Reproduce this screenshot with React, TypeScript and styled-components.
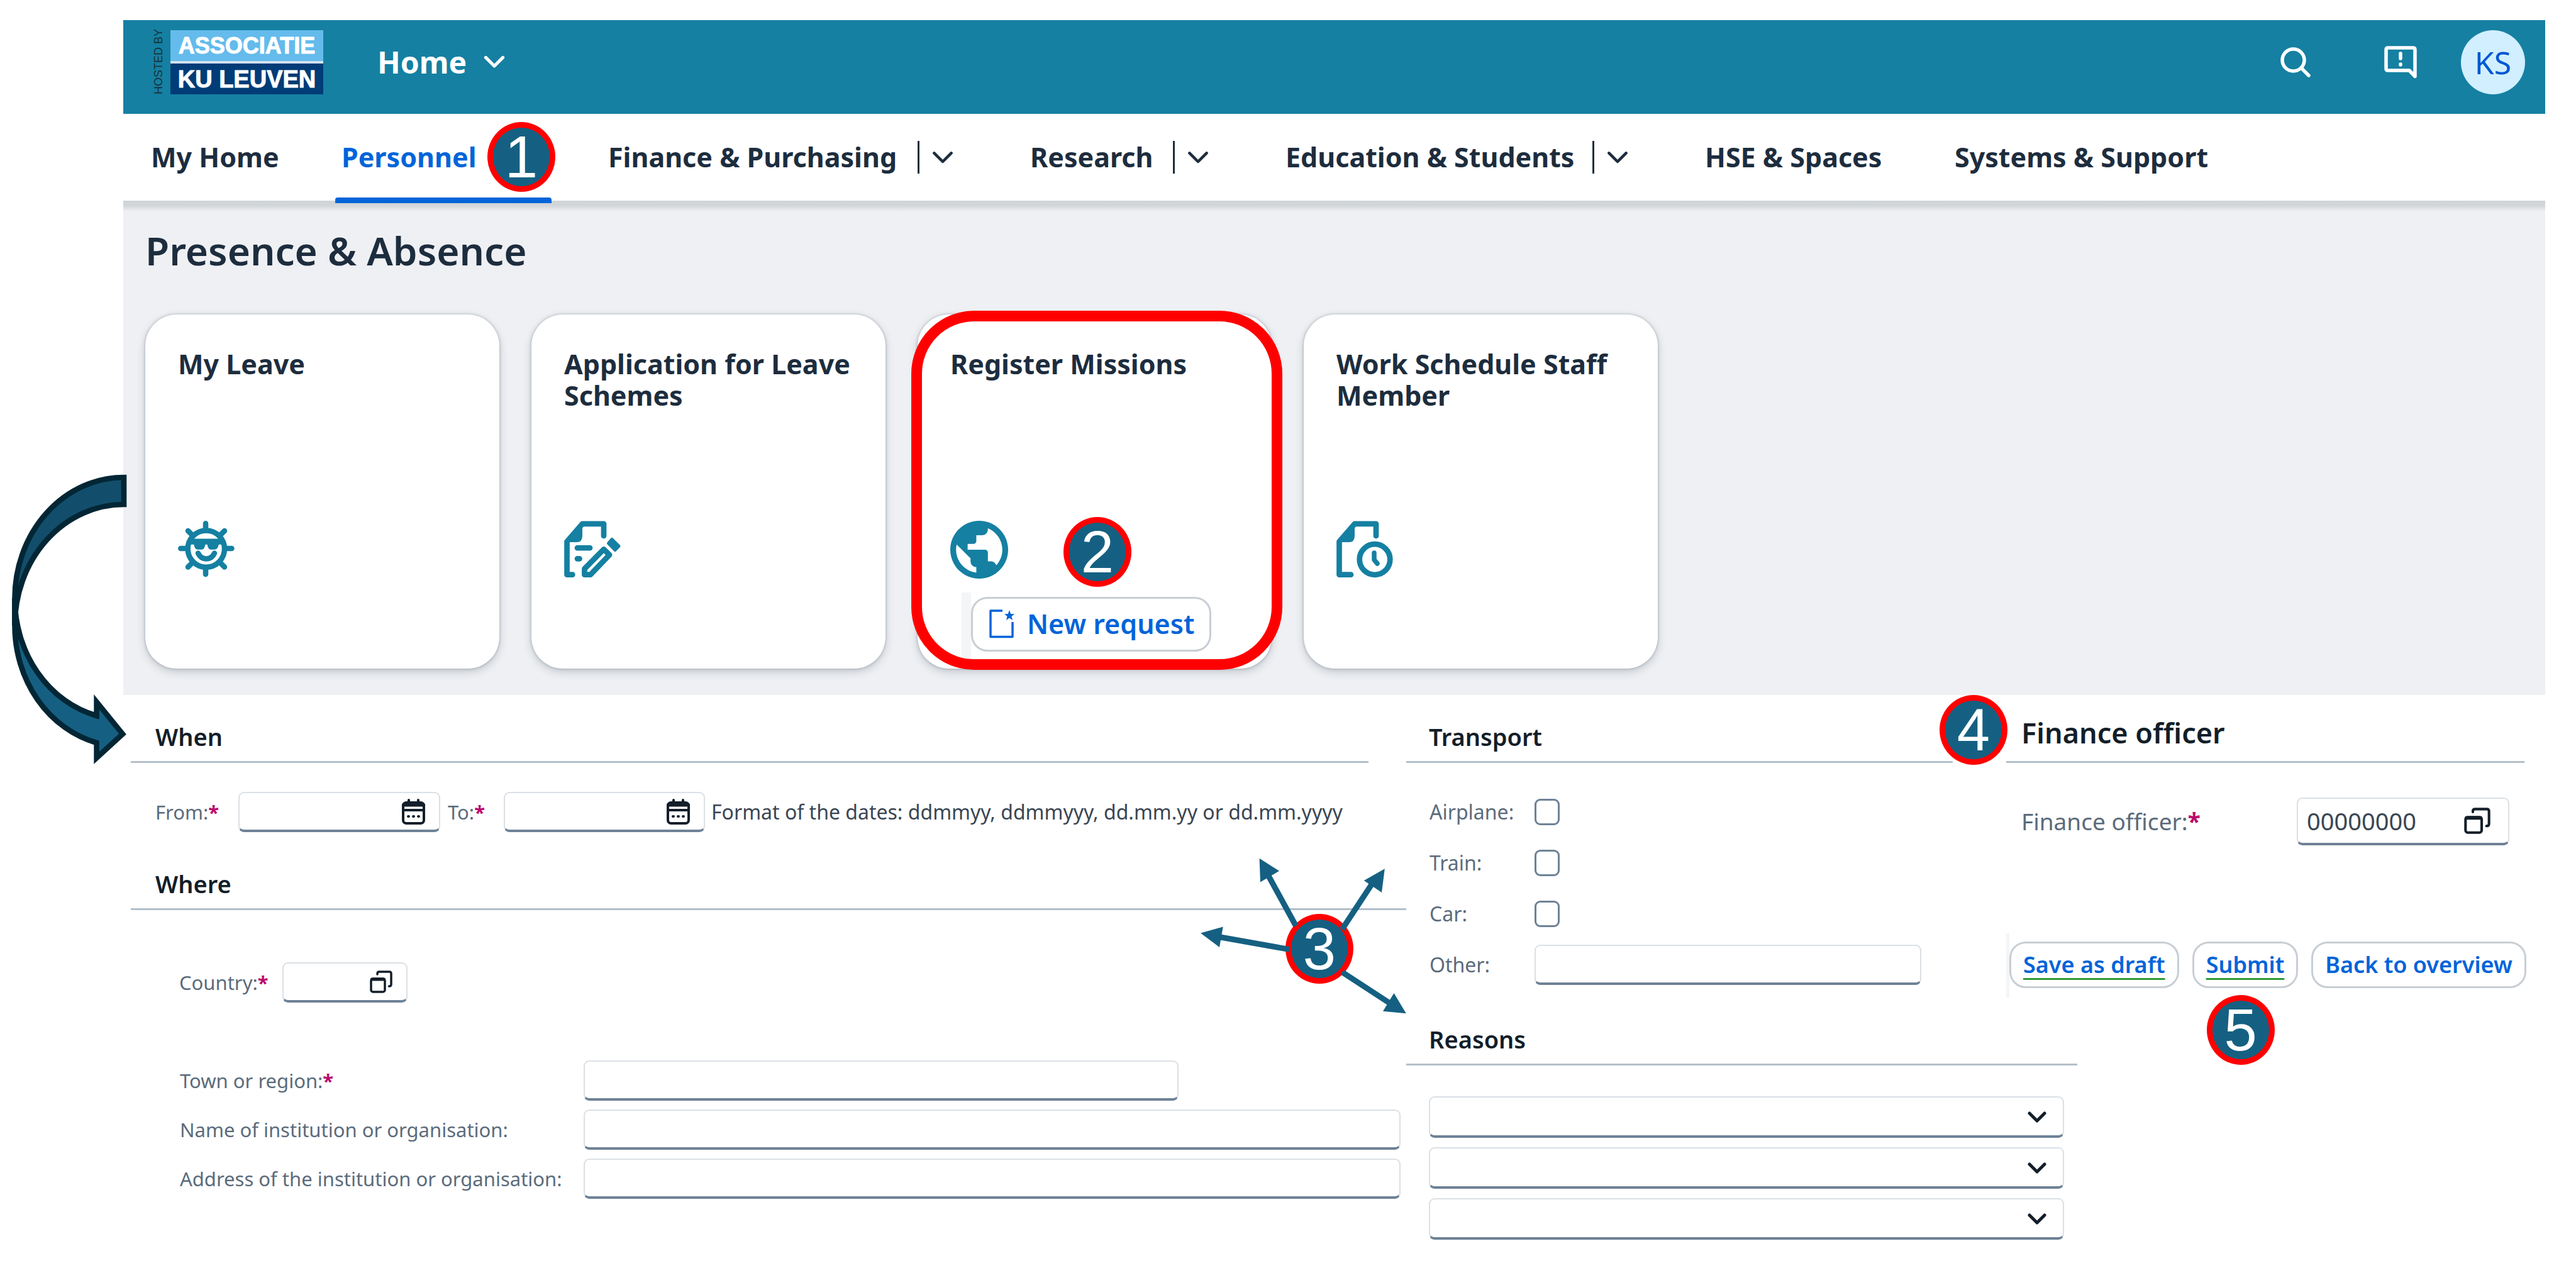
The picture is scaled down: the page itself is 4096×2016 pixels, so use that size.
import React from 'react';
import styled, { createGlobalStyle, css } from 'styled-components';
import { MdPublic } from 'react-icons/md';

const color = {
  brand: '#1580a2',
  ink: '#1d2d3e',
  heading: '#131e29',
  label: '#5b6b7b',
  text: '#3a4653',
  link: '#0064d9',
  shade: '#eff0f3',
  line: '#b3bfca',
  fieldEdge: '#dbe0e5',
  fieldBase: '#6e8296',
  required: '#ba066c',
  marker: '#156082',
  ring: '#ff0000',
};

const GlobalStyle = createGlobalStyle`
  *, *::before, *::after { box-sizing: border-box; }
  body {
    margin: 0;
    background: #fff;
    color: ${color.ink};
    font-family: "Noto Sans", "Open Sans", sans-serif;
  }
  button, input, select { font: inherit; color: inherit; margin: 0; }
  h1, h2, h3 { margin: 0; }
`;

const Page = styled.div`
  position: relative;
  padding: 32px 49px 40px 196px;
`;

/* ---------- header ---------- */

const Header = styled.header`
  display: flex;
  align-items: center;
  height: 149px;
  padding: 0 32px 16px 46px;
  background: ${color.brand};
  color: #fff;
`;

const Logo = styled.div`
  display: flex;
  align-items: center;
  gap: 9px;
`;

const HostedBy = styled.span`
  writing-mode: vertical-rl;
  transform: rotate(180deg);
  font: 18px/20px "Liberation Sans", sans-serif;
  color: #16303a;
  white-space: nowrap;
`;

const LogoPlates = styled.span`
  display: grid;
  gap: 4px;
  width: 243px;
  background: #d3e2f0;
`;

const Plate = styled.span<{ $bg: string; $size: number }>`
  height: 49px;
  background: ${(p) => p.$bg};
  color: #fff;
  font: bold ${(p) => p.$size}px/50px "Liberation Sans", sans-serif;
  -webkit-text-stroke: 1px #fff;
  text-align: center;
  white-space: nowrap;
`;

const HomeButton = styled.button`
  display: flex;
  align-items: center;
  gap: 27px;
  margin-left: 86px;
  padding: 0;
  border: 0;
  background: none;
  color: #fff;
  font-size: 48px;
  font-weight: 700;
  line-height: 64px;
`;

const HeaderTools = styled.div`
  display: flex;
  align-items: center;
  margin-left: auto;
`;

const ToolButton = styled.button<{ $after: number }>`
  display: flex;
  padding: 0;
  margin-right: ${(p) => p.$after}px;
  border: 0;
  background: none;
  color: #fff;
`;

const Avatar = styled.button`
  width: 102px;
  height: 102px;
  padding: 0;
  border: 0;
  border-radius: 50%;
  background: #d1efff;
  color: #0057d2;
  font-size: 50px;
  line-height: 100px;
`;

/* ---------- navigation ---------- */

const Nav = styled.nav`
  display: grid;
  grid-template-columns: 223px 344px 591px 326px 587px 317px auto;
  justify-content: start;
  column-gap: 80px;
  height: 138px;
  padding-left: 34px;
  background: #fff;
`;

const NavItem = styled.div<{ $active?: boolean }>`
  position: relative;
  display: flex;
  align-items: center;
  padding: 0 32px 0 10px;
  ${(p) =>
    p.$active &&
    css`
      &::after {
        content: '';
        position: absolute;
        left: 0;
        right: 0;
        bottom: -4px;
        height: 9px;
        border-radius: 4px 4px 0 0;
        background: ${color.link};
      }
    `}
`;

const NavLink = styled.a<{ $active?: boolean }>`
  color: ${(p) => (p.$active ? color.link : color.ink)};
  font-size: 43px;
  font-weight: 700;
  line-height: 60px;
  text-decoration: none;
  white-space: nowrap;
`;

const NavMore = styled.button`
  display: flex;
  align-items: center;
  height: 52px;
  margin-left: auto;
  padding: 0 0 0 20px;
  border: 0;
  border-left: 3px solid ${color.ink};
  background: none;
`;

/* ---------- tiles ---------- */

const Tiles = styled.section`
  padding: 39px 35px 42px;
  background: linear-gradient(#cfd4d7 0, #d2d6d9 8px, ${color.shade} 17px);
`;

const TilesTitle = styled.h1`
  margin-bottom: 62px;
  font-size: 62px;
  font-weight: 600;
  line-height: 80px;
`;

const TileRow = styled.div`
  display: flex;
  gap: 51px;
`;

const Tile = styled.article`
  position: relative;
  display: grid;
  grid-template-rows: 274px auto auto;
  align-content: start;
  width: 563px;
  height: 563px;
  padding: 54px 40px 0 52px;
  border-radius: 50px;
  background: #fff;
  box-shadow: 0 0 4px rgba(34, 53, 72, 0.3), 0 5px 14px rgba(34, 53, 72, 0.22);
`;

const TileTitle = styled.h2`
  font-size: 43px;
  font-weight: 700;
  line-height: 50px;
`;

const TileIcon = styled.span`
  display: flex;
  height: 92px;
  color: ${color.brand};
`;

const Highlight = styled.span`
  position: absolute;
  inset: -6px -17px -2px -10px;
  border: 17px solid ${color.ring};
  border-radius: 100px;
  pointer-events: none;
`;

const TileAction = styled.div`
  justify-self: start;
  margin: 22px 0 0 18px;
  padding: 7px 0 12px;
  border-left: 15px solid #f4f5f7;
`;

const ActionButton = styled.button<{ $large?: boolean; $checked?: boolean }>`
  display: flex;
  align-items: center;
  gap: 20px;
  height: ${(p) => (p.$large ? 87 : 74)}px;
  padding: ${(p) => (p.$large ? '0 24px 2px 26px' : '0 19px 2px')};
  border: 3px solid #c8ced4;
  border-radius: 26px;
  background: #fff;
  color: ${color.link};
  font-size: ${(p) => (p.$large ? 43 : 36)}px;
  font-weight: 600;
  white-space: nowrap;
  ${(p) =>
    p.$checked &&
    css`
      text-decoration: underline 3px #2e9a35;
      text-underline-offset: 8px;
      text-decoration-skip-ink: none;
    `}
`;

/* ---------- form ---------- */

const Form = styled.form`
  display: grid;
  grid-template-columns: minmax(0, 2028fr) minmax(0, 1778fr);
  padding: 0 33px 0 12px;
`;

const Column = styled.div`
  position: relative;
`;

const Split = styled.div`
  display: grid;
  grid-template-columns: minmax(0, 954fr) minmax(0, 824fr);
`;

const Panel = styled.section`
  position: relative;
`;

const PanelTitle = styled.h3<{ $indent: number; $right?: number; $before?: number }>`
  margin: ${(p) => p.$before ?? 0}px ${(p) => p.$right ?? 0}px 0 0;
  padding: 41px 0 14px ${(p) => p.$indent}px;
  border-bottom: 3px solid ${color.line};
  color: ${color.heading};
  font-size: 38px;
  font-weight: 600;
  line-height: 50px;
`;

const OfficerTitle = styled(PanelTitle)`
  padding: 35px 0 20px 24px;
  font-size: 45px;
`;

const DateRow = styled.div`
  display: grid;
  grid-template-columns: 132px 321px 101px 320px 1fr;
  align-items: center;
  margin-top: 46px;
  padding-left: 39px;
`;

const CountryRow = styled.div`
  display: grid;
  grid-template-columns: 164px 199px;
  align-items: center;
  margin-top: 83px;
  padding-left: 77px;
`;

const PlaceGrid = styled.div`
  display: grid;
  grid-template-columns: 642px 1fr;
  row-gap: 14px;
  align-items: center;
  margin-top: 92px;
  padding: 0 9px 0 78px;
`;

const TransportGrid = styled.div`
  display: grid;
  grid-template-columns: 167px 615px;
  grid-auto-rows: 66px;
  row-gap: 15px;
  align-items: center;
  margin-top: 45px;
  padding-left: 37px;
`;

const OfficerRow = styled.div`
  display: grid;
  grid-template-columns: 438px 338px;
  align-items: center;
  margin-top: 55px;
  padding-left: 24px;
`;

const ReasonList = styled.div`
  display: grid;
  gap: 15px;
  width: 1010px;
  margin: 49px 0 0 36px;
`;

const Label = styled.label<{ $size?: number; $inset?: number }>`
  padding-left: ${(p) => p.$inset ?? 0}px;
  color: ${color.label};
  font-size: ${(p) => p.$size ?? 31}px;
  line-height: 44px;
  white-space: nowrap;
`;

const Star = styled.span`
  color: ${color.required};
  font-weight: 700;
`;

const Hint = styled.span`
  padding-left: 10px;
  color: ${color.text};
  font-size: 32px;
  line-height: 44px;
  white-space: nowrap;
`;

const fieldFrame = css`
  height: 64px;
  border: 2px solid ${color.fieldEdge};
  border-bottom: 4px solid ${color.fieldBase};
  border-radius: 9px;
  background: #fff;
`;

const TextInput = styled.input<{ $width?: number }>`
  ${fieldFrame}
  width: ${(p) => (p.$width ? `${p.$width}px` : '100%')};
  padding: 0 14px;
  font-size: 31px;
`;

const Field = styled.div<{ $tall?: boolean }>`
  ${fieldFrame}
  display: flex;
  align-items: center;
  padding: 0 22px 0 14px;
  ${(p) => p.$tall && 'height: 76px; padding-right: 28px;'}
`;

const FieldInput = styled.input`
  flex: 1;
  min-width: 0;
  padding: 0;
  border: 0;
  outline: 0;
  background: none;
  color: ${color.text};
  font-size: 38px;
  line-height: 52px;
`;

const FieldButton = styled.button`
  display: flex;
  padding: 0;
  border: 0;
  background: none;
  color: #131e29;
`;

const Checkbox = styled.input`
  appearance: none;
  width: 40px;
  height: 42px;
  border: 3px solid ${color.fieldBase};
  border-radius: 9px;
  background: #fff;
`;

const SelectBox = styled.div`
  position: relative;
  display: flex;
`;

const Select = styled.select`
  ${fieldFrame}
  appearance: none;
  width: 100%;
  height: 66px;
  padding: 0 70px 0 14px;
  font-size: 31px;
`;

const SelectArrow = styled.span`
  position: absolute;
  right: 28px;
  top: 24px;
  display: flex;
  color: #131e29;
  pointer-events: none;
`;

const ButtonBar = styled.div`
  display: flex;
  gap: 21px;
  margin-top: 140px;
  padding: 13px 0 15px;
  border-left: 5px solid #f4f5f6;
`;

const Anchor = styled.span`
  position: relative;
`;

/* ---------- annotations ---------- */

const Badge = styled.span<{ $left?: number; $right?: number; $top: number }>`
  position: absolute;
  z-index: 2;
  top: ${(p) => p.$top}px;
  ${(p) => (p.$right !== undefined ? `right: ${p.$right}px;` : `left: ${p.$left ?? 0}px;`)}
  width: 108px;
  height: 111px;
  border: 9px solid ${color.ring};
  border-radius: 50%;
  background: ${color.marker};
  color: #fff;
  font: 94px/93px "Liberation Sans", Arial, sans-serif;
  text-align: center;
`;

const Pointers = styled.svg`
  position: absolute;
  z-index: 3;
  top: 254px;
  right: -4px;
  width: 340px;
  height: 260px;
  pointer-events: none;
`;

const FlowArrow = styled.svg`
  position: absolute;
  z-index: 2;
  left: 10px;
  top: 740px;
  width: 200px;
  height: 490px;
  pointer-events: none;
`;

/* ---------- icons ---------- */

const Chevron = ({ width = 32, stroke = 5 }: { width?: number; stroke?: number }) => (
  <svg width={width} height={width * 0.6} viewBox="0 0 30 18" fill="none" stroke="currentColor" strokeWidth={stroke} strokeLinecap="round" strokeLinejoin="round" aria-hidden>
    <path d="M3 3 15 15 27 3" />
  </svg>
);

const SearchIcon = () => (
  <svg width="48" height="48" viewBox="0 0 48 48" fill="none" stroke="currentColor" strokeWidth="5.500" strokeLinecap="round" aria-hidden>
    <circle cx="20.5" cy="20.5" r="17.5" />
    <path d="M33 33 45 45" />
  </svg>
);

const FeedbackIcon = () => (
  <svg width="52" height="52" viewBox="0 0 52 52" fill="none" stroke="currentColor" strokeWidth="5.500" strokeLinejoin="round" strokeLinecap="round" aria-hidden>
    <path d="M6 3H46Q49 3 49 6V48.500L40 39H6Q3 39 3 36V6Q3 3 6 3Z" />
    <path d="M26 12V20M26 29V30" />
  </svg>
);

const SunIcon = () => (
  <svg width="90" height="90" viewBox="0 0 90 90" fill="none" stroke="currentColor" strokeWidth="8.500" strokeLinecap="round" aria-hidden>
    <circle cx="44.800" cy="44.600" r="29.200" />
    <path d="M44 4.300V14M44 76V85M4.300 44H14M76 44H85.500M16 16 24 24M74 16 66 24M16 73.500 24 65.500M74 73.500 66 65.500" />
    <path d="M32 51.600Q36 60.500 45 60.500Q54 60.500 58 51.600" />
    <path fill="currentColor" stroke="none" d="M20 28.500H70V37.700H64.800Q63.500 45.700 58 45.700H52Q48 45.700 46.500 37.700H43.500Q42 45.700 38 45.700H31.500Q26.500 45.700 25.300 37.700H18Z" />
  </svg>
);

const SheetOutline = ({ foot }: { foot: number }) => (
  <>
    <path d={`M63 24V4.800H29L4.500 33V85.700H${foot}`} />
    <path fill="currentColor" stroke="none" d="M29 5V24Q29 34 20 34H4.500Z" />
  </>
);

const EditSheetIcon = () => (
  <svg width="92" height="92" viewBox="0 0 92 92" fill="none" stroke="currentColor" strokeWidth="8.700" strokeLinecap="round" strokeLinejoin="round" aria-hidden>
    <SheetOutline foot={13.3} />
    <path d="M21 43.200H41M21 60.300H24.500" />
    <path d="M63.100 45.300 72 54.200 41.800 85.700H32.400V76.400Z" />
    <path fill="currentColor" strokeWidth="5" d="M76 29.500 87 40.200 81 46.500 70.500 35.800Z" />
  </svg>
);

const ClockSheetIcon = () => (
  <svg width="92" height="92" viewBox="0 0 92 92" fill="none" stroke="currentColor" strokeWidth="8.700" strokeLinecap="round" strokeLinejoin="round" aria-hidden>
    <SheetOutline foot={23} />
    <circle cx="61" cy="61.500" r="24.300" />
    <path strokeWidth="7.500" d="M60 51V62L65 68" />
  </svg>
);

const NewPageIcon = () => (
  <svg width="40" height="46" viewBox="0 0 40 46" fill="none" stroke="currentColor" strokeWidth="3.500" strokeLinejoin="round" aria-hidden>
    <path d="M21 2H2V43.500H37V20" />
    <path fill="currentColor" stroke="none" d="M32 1 34.200 7 40 7.300 35.500 11 37 17 32 13.500 27 17 28.500 11 24 7.300 29.800 7Z" />
  </svg>
);

const CalendarIcon = () => (
  <svg width="37" height="41" viewBox="0 0 37 41" fill="none" stroke="currentColor" strokeWidth="4" strokeLinecap="round" aria-hidden>
    <rect x="2" y="6" width="33" height="33" rx="5" />
    <path d="M2 18H35M11 2V9M26 2V9" />
    <path d="M2 10H35" strokeWidth="5" />
    <path d="M10 28H11M18 28H19M26 28H27" />
  </svg>
);

const ValueHelpIcon = ({ size = 36 }: { size?: number }) => (
  <svg width={size} height={size} viewBox="0 0 36 36" fill="none" stroke="currentColor" strokeWidth="3.500" strokeLinejoin="round" strokeLinecap="round" aria-hidden>
    <rect x="2" y="13" width="22" height="21" rx="3" />
    <path strokeWidth="5" d="M3.500 14H22.500" />
    <path d="M12 6V5Q12 2 15 2H31Q34 2 34 5V22Q34 25 31 25H30.500" />
  </svg>
);

const Required = ({ children }: { children: React.ReactNode }) => (
  <>
    {children}
    <Star>*</Star>
  </>
);

export default function App() {
  return (
    <>
      <GlobalStyle />
      <Page>
        <Header>
          <Logo>
            <HostedBy>HOSTED BY</HostedBy>
            <LogoPlates>
              <Plate $bg="#64bbec" $size={36}>ASSOCIATIE</Plate>
              <Plate $bg="#003c77" $size={38}>KU LEUVEN</Plate>
            </LogoPlates>
          </Logo>
          <HomeButton type="button">
            Home
            <Chevron width={34} stroke={4.5} />
          </HomeButton>
          <HeaderTools>
            <ToolButton type="button" aria-label="Search" $after={117}>
              <SearchIcon />
            </ToolButton>
            <ToolButton type="button" aria-label="Feedback" $after={70}>
              <FeedbackIcon />
            </ToolButton>
            <Avatar type="button">KS</Avatar>
          </HeaderTools>
        </Header>

        <Nav>
          <NavItem>
            <NavLink href="#home">My Home</NavLink>
          </NavItem>
          <NavItem $active>
            <NavLink href="#personnel" $active>
              Personnel
            </NavLink>
            <Badge $left={242} $top={13}>1</Badge>
          </NavItem>
          <NavItem>
            <NavLink href="#finance">Finance &amp; Purchasing</NavLink>
            <NavMore type="button" aria-label="More finance">
              <Chevron width={34} stroke={4} />
            </NavMore>
          </NavItem>
          <NavItem>
            <NavLink href="#research">Research</NavLink>
            <NavMore type="button" aria-label="More research">
              <Chevron width={34} stroke={4} />
            </NavMore>
          </NavItem>
          <NavItem>
            <NavLink href="#education">Education &amp; Students</NavLink>
            <NavMore type="button" aria-label="More education">
              <Chevron width={34} stroke={4} />
            </NavMore>
          </NavItem>
          <NavItem>
            <NavLink href="#hse">HSE &amp; Spaces</NavLink>
          </NavItem>
          <NavItem>
            <NavLink href="#systems">Systems &amp; Support</NavLink>
          </NavItem>
        </Nav>

        <Tiles>
          <TilesTitle>Presence &amp; Absence</TilesTitle>
          <TileRow>
            <Tile>
              <TileTitle>My Leave</TileTitle>
              <TileIcon><SunIcon /></TileIcon>
            </Tile>
            <Tile>
              <TileTitle>Application for Leave Schemes</TileTitle>
              <TileIcon><EditSheetIcon /></TileIcon>
            </Tile>
            <Tile>
              <TileTitle>Register Missions</TileTitle>
              <TileIcon><MdPublic size={92} viewBox="2 2 20 20" /></TileIcon>
              <TileAction>
                <ActionButton type="button" $large>
                  <NewPageIcon />
                  New request
                </ActionButton>
              </TileAction>
              <Highlight />
              <Badge $left={232} $top={322}>2</Badge>
            </Tile>
            <Tile>
              <TileTitle>Work Schedule Staff Member</TileTitle>
              <TileIcon><ClockSheetIcon /></TileIcon>
            </Tile>
          </TileRow>
        </Tiles>

        <Form onSubmit={(e) => e.preventDefault()}>
          <Column>
            <PanelTitle $indent={39} $right={60}>When</PanelTitle>
            <DateRow>
              <Label htmlFor="from"><Required>From:</Required></Label>
              <Field>
                <FieldInput id="from" />
                <FieldButton type="button" aria-label="Pick start date"><CalendarIcon /></FieldButton>
              </Field>
              <Label htmlFor="to" $inset={12}><Required>To:</Required></Label>
              <Field>
                <FieldInput id="to" />
                <FieldButton type="button" aria-label="Pick end date"><CalendarIcon /></FieldButton>
              </Field>
              <Hint>Format of the dates: ddmmyy, ddmmyyy, dd.mm.yy or dd.mm.yyyy</Hint>
            </DateRow>

            <PanelTitle $indent={39} $before={16}>Where</PanelTitle>
            <CountryRow>
              <Label htmlFor="country"><Required>Country:</Required></Label>
              <Field>
                <FieldInput id="country" />
                <FieldButton type="button" aria-label="Choose country"><ValueHelpIcon /></FieldButton>
              </Field>
            </CountryRow>
            <PlaceGrid>
              <Label htmlFor="town"><Required>Town or region:</Required></Label>
              <TextInput id="town" $width={946} />
              <Label htmlFor="institution">Name of institution or organisation:</Label>
              <TextInput id="institution" />
              <Label htmlFor="address">Address of the institution or organisation:</Label>
              <TextInput id="address" />
            </PlaceGrid>

            <Badge $right={84} $top={348}>3</Badge>
            <Pointers viewBox="1900 1360 340 260" aria-hidden>
              <g stroke={color.marker} strokeWidth="9">
                <path d="M2060.500 1473 2014 1388M2134 1478.500 2187 1398M2050 1510.500 1935 1490M2134 1546.400 2216 1600" />
              </g>
              <g fill={color.marker}>
                <path d="M2002.600 1365.800 2034 1385.800 2004 1403.500Z" />
                <path d="M2201.800 1382.200 2168.800 1401 2197 1420Z" />
                <path d="M1909 1484.600 1944.700 1474.600 1939 1507Z" />
                <path d="M2235.800 1612.300 2216.500 1580 2199 1608.800Z" />
              </g>
            </Pointers>
          </Column>

          <Column>
            <Split>
              <Panel>
                <PanelTitle $indent={36} $right={85}>Transport</PanelTitle>
                <TransportGrid>
                  <Label htmlFor="airplane" $size={32}>Airplane:</Label>
                  <Checkbox id="airplane" type="checkbox" />
                  <Label htmlFor="train" $size={32}>Train:</Label>
                  <Checkbox id="train" type="checkbox" />
                  <Label htmlFor="car" $size={32}>Car:</Label>
                  <Checkbox id="car" type="checkbox" />
                  <Label htmlFor="other" $size={32}>Other:</Label>
                  <TextInput id="other" />
                </TransportGrid>
              </Panel>
              <Panel>
                <OfficerTitle $indent={24}>Finance officer</OfficerTitle>
                <OfficerRow>
                  <Label htmlFor="officer" $size={37}><Required>Finance officer:</Required></Label>
                  <Field $tall>
                    <FieldInput id="officer" defaultValue="00000000" />
                    <FieldButton type="button" aria-label="Choose officer"><ValueHelpIcon size={42} /></FieldButton>
                  </Field>
                </OfficerRow>
                <ButtonBar>
                  <ActionButton type="button" $checked>Save as draft</ActionButton>
                  <Anchor>
                    <ActionButton type="submit" $checked>Submit</ActionButton>
                    <Badge $left={23} $top={85}>5</Badge>
                  </Anchor>
                  <ActionButton type="button">Back to overview</ActionButton>
                </ButtonBar>
                <Badge $left={-106} $top={0}>4</Badge>
              </Panel>
            </Split>
            <PanelTitle $indent={36} $right={711}>Reasons</PanelTitle>
            <ReasonList>
              {['First reason', 'Second reason', 'Third reason'].map((name) => (
                <SelectBox key={name}>
                  <Select aria-label={name} defaultValue="">
                    <option value="" />
                  </Select>
                  <SelectArrow><Chevron width={30} stroke={5} /></SelectArrow>
                </SelectBox>
              ))}
            </ReasonList>
          </Column>
        </Form>

        <FlowArrow viewBox="10 740 200 490" fill={color.marker} stroke="#032635" strokeWidth="8.600" aria-hidden>
          <path fill="#124e6b" d="M197 759A173.500 192.600 0 0 0 23.500 951.600V994.600A173.500 192.600 0 0 1 197 802Z" />
          <path d="M23.500 951.600V994.600A173.500 192.600 0 0 0 153.600 1181V1205L195 1167 153.600 1116V1138A173.500 192.600 0 0 1 23.500 951.600Z" />
        </FlowArrow>
      </Page>
    </>
  );
}
